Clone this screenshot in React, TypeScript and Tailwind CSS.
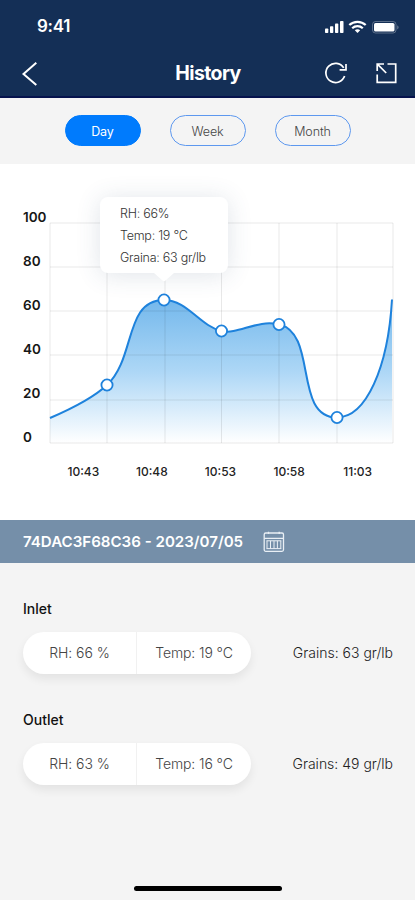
import { useState } from "react";

const ranges = ["Day", "Week", "Month"];
const levels = [100, 80, 60, 40, 20, 0];
const times = ["10:43", "10:48", "10:53", "10:58", "11:03"];

const points = [
  { x: 57, y: 190 },
  { x: 114, y: 105 },
  { x: 171.5, y: 136 },
  { x: 229, y: 129.5 },
  { x: 287, y: 222.5 },
];

const gridX = [0, 57, 115, 171.5, 229, 287, 343];
const gridY = [28, 72, 116, 160, 205, 248];

const curve =
  "M0 223 C21 214 42 204 57 190 C86 163 74 105 114 105 C137 105 150 131 171.5 136 C188 140 207 124 229 129.5 C268 138 243 222.5 287 222.5 C316 222.5 338 173 342 104.5";

const readings = [
  { name: "Inlet", rh: 66, temp: 19, grains: 63 },
  { name: "Outlet", rh: 63, temp: 16, grains: 49 },
];

function StatusIcons() {
  return (
    <svg width="76" height="16" viewBox="0 0 76 16" fill="white">
      <rect x="1" y="9.5" width="3.3" height="4.5" rx="0.8" />
      <rect x="6" y="7.3" width="3.3" height="6.7" rx="0.8" />
      <rect x="11" y="4.6" width="3.3" height="9.4" rx="0.8" />
      <rect x="16" y="2" width="3.5" height="12" rx="0.8" />
      <g fill="none" stroke="white" strokeWidth="2.2">
        <path d="M25.3 6 C29.8 1.7 37.2 1.7 41.7 6" />
        <path d="M28.2 9.2 C31.2 6.3 35.8 6.3 38.8 9.2" />
      </g>
      <path d="M33.5 14 L30.8 11.2 C32.3 9.9 34.7 9.9 36.2 11.2 Z" />
      <rect x="48.5" y="2.5" width="23.5" height="11.5" rx="3" fill="none" stroke="white" strokeOpacity="0.3" />
      <rect x="50" y="4" width="20.5" height="8.6" rx="1.6" />
      <path d="M73.3 6.2 C75 7 75 9.6 73.3 10.4 Z" fillOpacity="0.4" />
    </svg>
  );
}

function Header() {
  return (
    <header className="h-[98px] bg-[#142f56] border-b-2 border-[#06134d] text-white">
      <div className="h-[50px] flex items-center justify-between pl-[37px] pr-[15px] pt-[3px]">
        <span className="text-[17px] font-semibold tracking-[-0.3px]">9:41</span>
        <StatusIcons />
      </div>
      <div className="h-[46px] grid grid-cols-[1fr_auto_1fr] items-center px-[17px]">
        <button className="w-6 h-7 -ml-px pt-px">
          <svg width="24" height="26" viewBox="0 0 24 26" fill="none" stroke="white" strokeWidth="2">
            <path d="M20.3 1.8 L7.5 13 L20.3 24" />
          </svg>
        </button>
        <h1 className="text-[19.5px] font-bold tracking-[-0.6px] pt-[2px] pl-px">History</h1>
        <div className="flex justify-end gap-[25px]">
          <svg width="26" height="24" viewBox="0 0 26 24" fill="none" stroke="white" strokeWidth="1.7">
            <path d="M21.6 15 A9.6 9.6 0 1 1 20.7 6.9" />
            <path d="M23 3 V8.9 H16.6" />
          </svg>
          <svg width="24" height="24" viewBox="0 0 24 24" fill="none" stroke="white" strokeWidth="1.7">
            <path d="M13.5 3 H21.7 V21.3 H3.2 V13.5" />
            <path d="M3.2 10 V3 H10 M3.4 3.2 L12.2 12" />
          </svg>
        </div>
      </div>
    </header>
  );
}

function Chart() {
  return (
    <section className="h-[356px] bg-white pt-[31px] pl-[23px]">
      <div className="flex relative">
        <div className="w-[27px] text-[13.5px] font-semibold text-[#161616] shrink-0">
          {levels.map((level) => (
            <div key={level} className="h-[44px] leading-[44px]">
              {level}
            </div>
          ))}
        </div>
        <svg width="343" height="264" viewBox="0 0 343 264" className="overflow-visible shrink-0">
          <defs>
            <linearGradient id="area" x1="0" y1="105" x2="0" y2="248" gradientUnits="userSpaceOnUse">
              <stop offset="0" stopColor="#74b8ec" />
              <stop offset="0.5" stopColor="#add7f6" />
              <stop offset="1" stopColor="#ffffff" />
            </linearGradient>
          </defs>
          <path d={`${curve} V248 H0 Z`} fill="url(#area)" />
          <g stroke="#000000" strokeOpacity="0.09">
            {gridX.map((x) => (
              <line key={x} x1={x} x2={x} y1="28" y2="248" />
            ))}
            {gridY.map((y) => (
              <line key={y} x1="0" x2="343" y1={y} y2={y} />
            ))}
          </g>
          <path d={curve} fill="none" stroke="#1e82dc" strokeWidth="2" />
          {points.map((p) => (
            <circle key={p.x} cx={p.x} cy={p.y} r="5.6" fill="white" stroke="#1e82dc" strokeWidth="1.8" />
          ))}
        </svg>
        <div className="absolute left-[77px] top-[2px] w-[128px] h-[76px] rounded-lg bg-white pl-[20px] pt-[6px] text-[12.5px] tracking-[-0.25px] leading-[22px] font-light text-[#333] shadow-[0_2px_24px_rgba(60,90,120,0.16)]">
          <p>RH: 66%</p>
          <p>Temp: 19 °C</p>
          <p>Graina: 63 gr/lb</p>
          <svg width="20" height="9" viewBox="0 0 20 9" fill="white" className="absolute left-[54px] top-[76px]">
            <path d="M0 0 H20 L11.5 7.5 Q10 8.8 8.5 7.5 Z" />
          </svg>
        </div>
      </div>
      <div className="flex w-[343px] ml-[26px] mt-[4px] text-[12px] leading-[18px] font-medium text-[#222]">
        {times.map((time) => (
          <span key={time} className="flex-1 text-center">
            {time}
          </span>
        ))}
      </div>
    </section>
  );
}

function CalendarIcon() {
  return (
    <svg width="22" height="22" viewBox="0 0 22 22" fill="none" stroke="#e9eff5" strokeWidth="1.3">
      <rect x="1.2" y="2" width="19.3" height="18.3" rx="1.5" />
      <path d="M1.2 7.3 H20.5 M5.5 0.8 V3 M16.2 0.8 V3" />
      <path d="M3.5 9.8 H18.3 M3.5 17.6 H18.3 M4 9.8 V17.6 M7.5 9.8 V17.6 M11 9.8 V17.6 M14.4 9.8 V17.6 M17.8 9.8 V17.6" strokeWidth="1" />
    </svg>
  );
}

export default function App() {
  const [range, setRange] = useState("Day");

  return (
    <div className="w-full h-[900px] overflow-hidden flex flex-col bg-[#f4f4f4] font-['Inter',sans-serif]">
      <Header />

      {/* Range switch */}
      <nav className="h-[66px] flex justify-center gap-[29px] pt-[17px]">
        {ranges.map((item) => (
          <button
            key={item}
            onClick={() => setRange(item)}
            className={`w-[76px] h-[31px] rounded-full border pt-[3px] text-[12.5px] tracking-[-0.1px] ${
              range === item
                ? "bg-[#007bfd] border-[#007bfd] text-white"
                : "border-[#5d98ef] text-[#444] font-light"
            }`}
          >
            {item}
          </button>
        ))}
      </nav>

      <Chart />

      {/* Device and date */}
      <div className="h-[43px] bg-[#758fa9] flex items-center pl-[23px] gap-[20px] text-white">
        <span className="text-[15.1px] font-semibold whitespace-nowrap pt-[2px]">74DAC3F68C36 - 2023/07/05</span>
        <CalendarIcon />
      </div>

      <main className="flex-1 pl-[23px] pr-[22px] pt-[36px]">
        {readings.map((r) => (
          <div key={r.name} className="h-[111px]">
            <h2 className="text-[14px] leading-[20px] font-medium text-[#111]">{r.name}</h2>
            <div className="flex items-center justify-between mt-[13px] text-[14px] font-light text-[#444]">
              <div className="flex w-[228px] h-[42px] pb-[2px] rounded-full bg-white shadow-[0_5px_10px_rgba(0,0,0,0.07)]">
                <div className="w-[114px] flex items-center justify-center border-r border-[#f1f1f1] -mb-[2px] pb-[2px] tracking-[-0.05px]">
                  RH: {r.rh} %
                </div>
                <div className="flex-1 flex items-center justify-center tracking-[-0.1px]">Temp: {r.temp} °C</div>
              </div>
              <span className="text-[#222] pb-[2px]">Grains: {r.grains} gr/lb</span>
            </div>
          </div>
        ))}
      </main>

      <div className="w-[148px] h-[5px] rounded-full bg-black mx-auto mb-[9px] shrink-0" />
    </div>
  );
}
